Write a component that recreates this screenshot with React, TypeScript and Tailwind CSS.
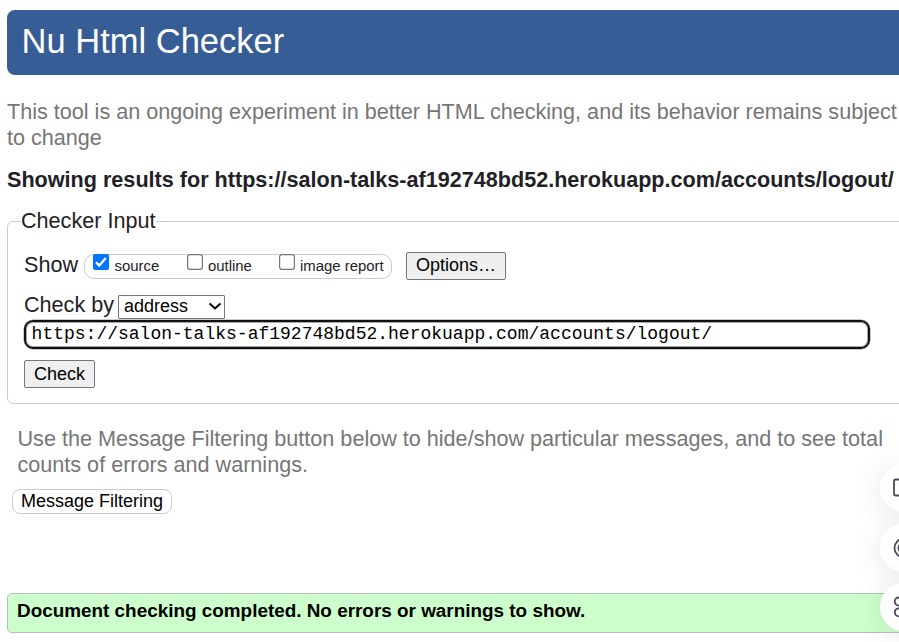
import type { ReactNode } from "react";

function Box({ label, checked }: { label: string; checked?: boolean }) {
  return (
    <label className="flex h-[23px] items-start whitespace-nowrap">
      {checked ? (
        <svg className="-mt-px size-4 shrink-0" viewBox="0 0 16 16">
          <rect width="16" height="16" rx="2" fill="#0075ff" />
          <path d="M3 8.3 6.3 11.6 12.8 4" fill="none" stroke="#fff" strokeWidth="2.3" />
        </svg>
      ) : (
        <svg className="-mt-px size-4 shrink-0" viewBox="0 0 16 16">
          <rect x="0.6" y="0.6" width="14.8" height="14.8" rx="2.4" fill="#fff" stroke="#767676" strokeWidth="1.2" />
        </svg>
      )}
      <span className="ml-[5.5px] pt-[2px] text-[14.9px] leading-[18px]">{label}</span>
    </label>
  );
}

function Bubble({ children }: { children: ReactNode }) {
  return (
    <div className="flex size-12 items-center justify-center rounded-full bg-white shadow-[0_4px_32px_rgba(0,0,0,0.1)]">
      <svg className="size-6" viewBox="0 0 24 24" fill="none" stroke="#4b4a58" strokeWidth="1.8">
        {children}
      </svg>
    </div>
  );
}

export default function App() {
  return (
    <div className="relative h-[642px] w-[899px] overflow-hidden bg-white pt-[10px] pl-[7px] font-['Liberation_Sans',Arial,sans-serif] text-[#1f2126]">
      <div className="w-[920px]">
        <h1 className="h-[65px] rounded-[8px] bg-[#365d95] pl-[14.6px] text-[34.5px] leading-[62px] text-white">Nu Html Checker</h1>
        <p className="mt-6 w-[892px] text-[21.6px] leading-[26px] whitespace-nowrap text-[#767676]">
          This tool is an ongoing experiment in better HTML checking, and its behavior remains subject
          <br />
          to change
        </p>
        <h2 className="mt-4 w-[892px] text-[21.6px] leading-[26px] font-bold whitespace-nowrap">
          Showing results for https://salon-talks-af192748bd52.herokuapp.com/accounts/logout/
        </h2>
        <fieldset className="mt-[15px] h-[196px] rounded-[6px] border border-[#ccc] pl-4">
          <legend className="-ml-[3px] h-[26px] w-[135px] text-[21.6px] leading-[26px] whitespace-nowrap">Checker Input</legend>
          <div className="mt-[18px] flex h-7 items-center">
            <span className="w-[60px] pb-0.5 text-[21.6px] leading-[26px]">Show</span>
            <div className="flex h-[25px] w-[308px] rounded-[10px] border border-[#ccc] pl-2">
              <div className="w-[93.5px]"><Box label="source" checked /></div>
              <div className="w-[92px]"><Box label="outline" /></div>
              <Box label="image report" />
            </div>
            <button className="ml-[14px] h-7 w-[100px] rounded-[2px] border border-[#767676] bg-[#efefef] pb-0.5 text-[18px] leading-6 text-black">Options…</button>
          </div>
          <div className="mt-[13px] flex h-[27px] items-center">
            <span className="w-[94px] pb-[3px] text-[21.6px] leading-[26px] whitespace-nowrap">Check by</span>
            <div className="flex h-6 w-[107px] items-center justify-between rounded-[1px] border border-[#767676] pl-[5px] text-[18px] text-black">
              address
              <svg className="mr-[2px] h-[9px] w-[14px]" viewBox="0 0 14 9" fill="none" stroke="#000" strokeWidth="2">
                <path d="m1.5 1.5 5.5 5 5.5-5" />
              </svg>
            </div>
          </div>
          <div className="-mt-px h-[30px] w-[847px] pt-px pr-px">
            <div className="h-[29px] rounded-[9px] border-2 border-[#101010] pl-[5.6px] font-['Liberation_Mono',monospace] text-[18px] leading-[25px] whitespace-nowrap text-black shadow-[inset_0_0_0_1px_#aaa,0_0_0_0.5px_#999]">
              https://salon-talks-af192748bd52.herokuapp.com/accounts/logout/
            </div>
          </div>
          <button className="mt-[11px] block h-7 w-[71px] rounded-[2px] border border-[#767676] bg-[#efefef] text-[18px] leading-6 text-black">Check</button>
        </fieldset>
        <p className="mt-[22px] ml-[10.5px] text-[21.6px] leading-[26px] whitespace-nowrap text-[#767676]">
          Use the Message Filtering button below to hide/show particular messages, and to see total
          <br />
          counts of errors and warnings.
        </p>
        <button className="mt-[11px] ml-[5px] block h-[25px] w-[160px] rounded-[8px] border border-[#ccc] bg-white pb-px text-[18px] leading-[22px] whitespace-nowrap text-black">Message Filtering</button>
        <p className="mt-[79px] h-10 rounded-[5px] border border-[#bbb] bg-[#ccffcc] pl-[9px] text-[18.9px] leading-[34px] font-bold text-black">
          Document checking completed. No errors or warnings to show.
        </p>
      </div>
      <div className="absolute top-[464px] left-[880px] flex flex-col gap-[11.5px]">
        <Bubble><rect x="2" y="3.5" width="20" height="16" rx="1.5" /></Bubble>
        <Bubble><circle cx="12" cy="12" r="9.5" /><circle cx="12" cy="12" r="5.5" /></Bubble>
        <Bubble><circle cx="6.8" cy="6.5" r="4" /><circle cx="6.8" cy="17.3" r="4" /><circle cx="17.5" cy="6.5" r="4" /><circle cx="17.5" cy="17.3" r="4" /></Bubble>
      </div>
    </div>
  );
}
